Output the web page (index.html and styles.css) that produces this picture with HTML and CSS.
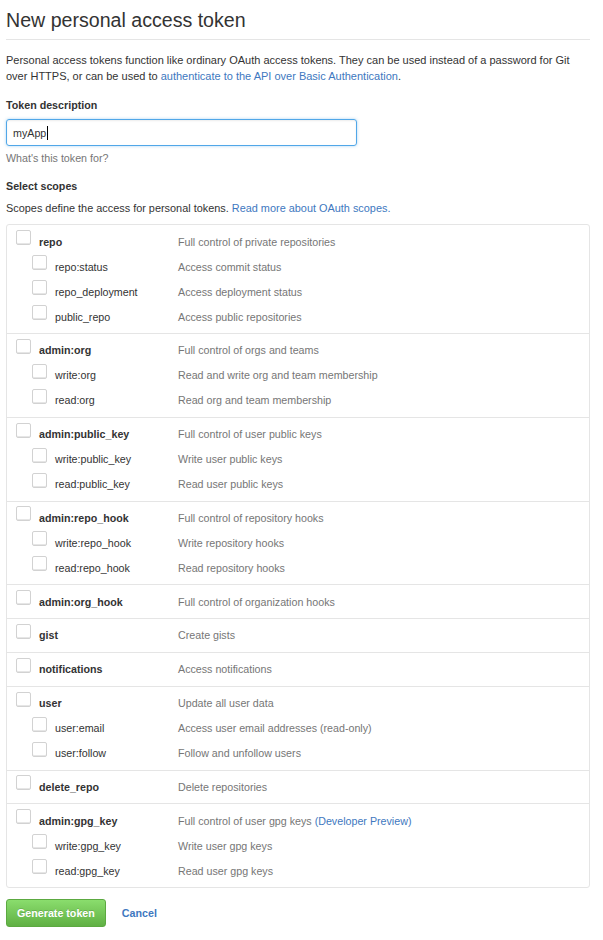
FILE: index.html
```html
<!DOCTYPE html>
<html>
<head>
<meta charset="utf-8">
<link rel="stylesheet" href="styles.css">
</head>
<body>
<div class="page">
  <h1 class="subhead">New personal access token</h1>
  <p class="intro">Personal access tokens function like ordinary OAuth access tokens. They can be used instead of a password for Git over HTTPS, or can be used to <a href="#">authenticate to the API over Basic Authentication</a>.</p>

  <div class="field">
    <label class="field-label">Token description</label>
    <div class="input"><span>myApp</span><span class="caret"></span></div>
    <p class="note">What's this token for?</p>
  </div>

  <div class="field">
    <label class="field-label">Select scopes</label>
    <p class="scopes-intro">Scopes define the access for personal tokens. <a href="#">Read more about OAuth scopes.</a></p>
  </div>

  <div class="scopes">
    <div class="group">
      <div class="row top"><span class="name"><span class="cb"></span>repo</span><span class="desc">Full control of private repositories</span></div>
      <div class="row child"><span class="name"><span class="cb"></span>repo:status</span><span class="desc">Access commit status</span></div>
      <div class="row child"><span class="name"><span class="cb"></span>repo_deployment</span><span class="desc">Access deployment status</span></div>
      <div class="row child"><span class="name"><span class="cb"></span>public_repo</span><span class="desc">Access public repositories</span></div>
    </div>
    <div class="group">
      <div class="row top"><span class="name"><span class="cb"></span>admin:org</span><span class="desc">Full control of orgs and teams</span></div>
      <div class="row child"><span class="name"><span class="cb"></span>write:org</span><span class="desc">Read and write org and team membership</span></div>
      <div class="row child"><span class="name"><span class="cb"></span>read:org</span><span class="desc">Read org and team membership</span></div>
    </div>
    <div class="group">
      <div class="row top"><span class="name"><span class="cb"></span>admin:public_key</span><span class="desc">Full control of user public keys</span></div>
      <div class="row child"><span class="name"><span class="cb"></span>write:public_key</span><span class="desc">Write user public keys</span></div>
      <div class="row child"><span class="name"><span class="cb"></span>read:public_key</span><span class="desc">Read user public keys</span></div>
    </div>
    <div class="group">
      <div class="row top"><span class="name"><span class="cb"></span>admin:repo_hook</span><span class="desc">Full control of repository hooks</span></div>
      <div class="row child"><span class="name"><span class="cb"></span>write:repo_hook</span><span class="desc">Write repository hooks</span></div>
      <div class="row child"><span class="name"><span class="cb"></span>read:repo_hook</span><span class="desc">Read repository hooks</span></div>
    </div>
    <div class="group">
      <div class="row top"><span class="name"><span class="cb"></span>admin:org_hook</span><span class="desc">Full control of organization hooks</span></div>
    </div>
    <div class="group">
      <div class="row top"><span class="name"><span class="cb"></span>gist</span><span class="desc">Create gists</span></div>
    </div>
    <div class="group">
      <div class="row top"><span class="name"><span class="cb"></span>notifications</span><span class="desc">Access notifications</span></div>
    </div>
    <div class="group">
      <div class="row top"><span class="name"><span class="cb"></span>user</span><span class="desc">Update all user data</span></div>
      <div class="row child"><span class="name"><span class="cb"></span>user:email</span><span class="desc">Access user email addresses (read-only)</span></div>
      <div class="row child"><span class="name"><span class="cb"></span>user:follow</span><span class="desc">Follow and unfollow users</span></div>
    </div>
    <div class="group">
      <div class="row top"><span class="name"><span class="cb"></span>delete_repo</span><span class="desc">Delete repositories</span></div>
    </div>
    <div class="group">
      <div class="row top"><span class="name"><span class="cb"></span>admin:gpg_key</span><span class="desc">Full control of user gpg keys <a href="#">(Developer Preview)</a></span></div>
      <div class="row child"><span class="name"><span class="cb"></span>write:gpg_key</span><span class="desc">Write user gpg keys</span></div>
      <div class="row child"><span class="name"><span class="cb"></span>read:gpg_key</span><span class="desc">Read user gpg keys</span></div>
    </div>
  </div>

  <div class="actions">
    <button class="btn-primary">Generate token</button>
    <a href="#" class="cancel">Cancel</a>
  </div>
</div>
</body>
</html>
```

FILE: styles.css
```css
html, body {
  margin: 0;
  padding: 0;
  background: #fff;
}
body {
  font-family: "Liberation Sans", Arial, sans-serif;
  font-size: 10.7px;
  line-height: 16px;
  color: #333;
}
a {
  color: #4078c0;
  text-decoration: none;
}
.page {
  padding: 0 13px 0 6px;
}
.subhead {
  margin: 0;
  padding: 8px 0 7px;
  font-size: 19.6px;
  line-height: 24px;
  font-weight: normal;
  color: #333;
  border-bottom: 1px solid #e5e5e5;
}
.intro {
  margin: 12px 0 0;
  font-size: 11px;
}
.field {
  margin-top: 13px;
}
.field-label {
  display: block;
  font-weight: bold;
  line-height: 16px;
}
.input {
  margin-top: 6px;
  width: 343px;
  height: 25px;
  box-sizing: content-box;
  border: 1px solid #51a7e8;
  border-radius: 3px;
  box-shadow: 0 0 3px rgba(81, 167, 232, 0.5), inset 0 1px 2px rgba(0, 0, 0, 0.075);
  display: flex;
  align-items: center;
  padding-left: 6px;
  color: #333;
}
.caret {
  display: inline-block;
  width: 1px;
  height: 14px;
  background: #000;
  margin-left: 1px;
}
.note {
  margin: 4px 0 0;
  color: #767676;
}
.field + .field {
  margin-top: 12px;
}
.scopes-intro {
  margin: 6px 0 0;
  font-size: 10.9px;
}
.scopes {
  margin-top: 8px;
  border: 1px solid #e5e5e5;
  border-radius: 3px;
}
.group {
  padding: 4px 0 4px;
}
.group + .group {
  border-top: 1px solid #e5e5e5;
  padding-top: 3.8px;
}
.row {
  display: grid;
  grid-template-columns: 171px 1fr;
  height: 25px;
  align-items: center;
}
.name {
  display: flex;
  align-items: center;
}
.top .name {
  font-weight: bold;
  padding-left: 9px;
}
.child .name {
  padding-left: 25px;
}
.cb {
  width: 13px;
  height: 13px;
  border: 1px solid #d2d2d2;
  border-radius: 2px;
  background: #fff;
  box-shadow: inset 0 -1px 0 #e6e6e6;
  margin-right: 8px;
  position: relative;
  top: -4px;
}
.desc {
  color: #767676;
}
.actions {
  display: flex;
  align-items: center;
  margin-top: 11px;
  gap: 16px;
}
.btn-primary {
  font-family: inherit;
  font-size: 10.7px;
  font-weight: bold;
  color: #fff;
  height: 28px;
  padding: 0 10px;
  border: 1px solid #5ca941;
  border-radius: 3px;
  background: linear-gradient(#8add6d, #60b044);
  text-shadow: 0 -1px 0 rgba(0, 0, 0, 0.15);
}
.cancel {
  font-weight: bold;
}
```
